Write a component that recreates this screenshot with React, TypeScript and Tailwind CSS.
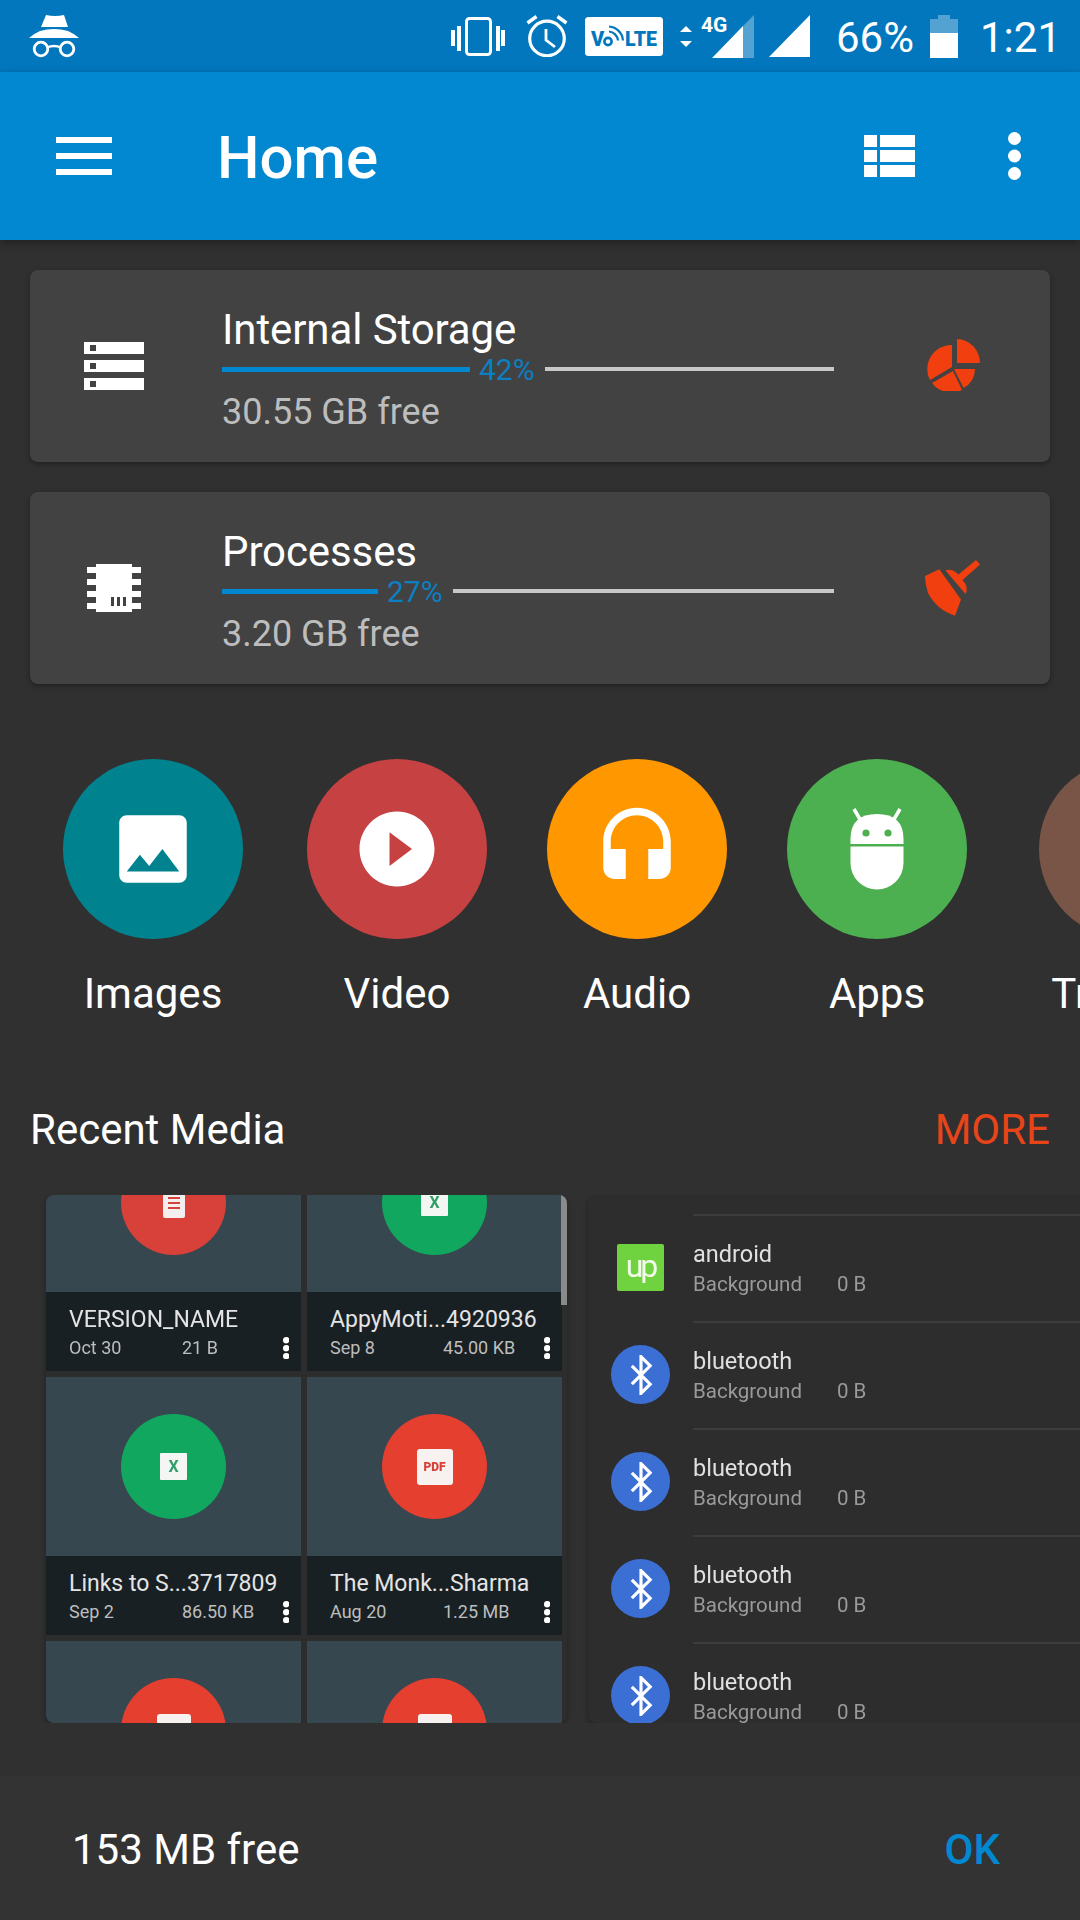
import React from "react";

function Incognito() {
  return (
    <svg width="50" height="44" viewBox="0 0 50 44" fill="white" className="shrink-0">
      <path d="M17 1 Q26 3 35 1 L39 13 H12 Z" />
      <path d="M0 24 Q6 19 11 17 Q25 13 39 17 Q44 19 50 24 Z" />
      <circle cx="12" cy="35" r="6.8" fill="none" stroke="white" strokeWidth="2.8" />
      <circle cx="38" cy="35" r="6.8" fill="none" stroke="white" strokeWidth="2.8" />
      <path d="M18 33.5 Q25 30.5 32 33.5" fill="none" stroke="white" strokeWidth="2.4" />
    </svg>
  );
}

function Vibrate() {
  return (
    <svg width="54" height="39" viewBox="0 0 54 39" fill="white" className="shrink-0">
      <rect x="0" y="13" width="4" height="16" />
      <rect x="6" y="9" width="4" height="25" />
      <rect x="15.5" y="1.5" width="24" height="36" rx="3" fill="none" stroke="white" strokeWidth="3" />
      <rect x="45" y="9" width="4" height="25" />
      <rect x="50" y="13" width="4" height="16" />
    </svg>
  );
}

function Alarm() {
  return (
    <svg width="42" height="42" viewBox="0 0 42 42" fill="none" stroke="white" className="shrink-0">
      <circle cx="21" cy="23.5" r="17.3" strokeWidth="3.2" />
      <path d="M1.5 8 L10.5 1.5 M31.5 1.5 L40.5 8" strokeWidth="3.4" />
      <path d="M20 14 V25 L29 32" strokeWidth="2.8" />
    </svg>
  );
}

function Volte() {
  return (
    <svg width="78" height="39" viewBox="0 0 78 39" className="shrink-0">
      <rect width="78" height="39" rx="3.5" fill="white" />
      <text x="6" y="29" fontFamily="Roboto" fontWeight="900" fontSize="20" fill="#0277bd">V</text>
      <circle cx="23" cy="24.5" r="3.6" fill="none" stroke="#0277bd" strokeWidth="2.6" />
      <path d="M24 14.5 A10 10 0 0 1 33 23.5 M24 9.5 A15 15 0 0 1 38 23.5" fill="none" stroke="#0277bd" strokeWidth="2.2" />
      <text x="40" y="29" fontFamily="Roboto" fontWeight="900" fontSize="20" fill="#0277bd" textLength="32" lengthAdjust="spacingAndGlyphs">LTE</text>
    </svg>
  );
}

function Arrows() {
  return (
    <svg width="12" height="21" viewBox="0 0 12 21" fill="white" className="shrink-0">
      <path d="M6 0 L12 6 H0 Z" />
      <path d="M0 15 H12 L6 21 Z" />
    </svg>
  );
}

function SignalWith4G() {
  return (
    <div className="relative w-[53px] h-[43px] shrink-0">
      <span className="absolute left-0 -top-[1px] text-[21px] leading-[22px] font-bold text-white">4G</span>
      <svg width="53" height="43" viewBox="0 0 53 43" className="block">
        <path d="M11 43 L42 11 V43 Z" fill="white" />
        <path d="M42 11 L53 0 V43 H42 Z" fill="white" fillOpacity="0.32" />
      </svg>
    </div>
  );
}

function Signal() {
  return (
    <svg width="41" height="42" viewBox="0 0 41 42" className="shrink-0">
      <path d="M0 42 L41 0 V42 Z" fill="white" />
    </svg>
  );
}

function Battery() {
  return (
    <svg width="28" height="43" viewBox="0 0 28 43" className="shrink-0">
      <path d="M8 0 H20 V4 H28 V18 H0 V4 H8 Z" fill="white" fillOpacity="0.32" />
      <rect y="18" width="28" height="25" fill="white" />
    </svg>
  );
}

function ListViewIcon() {
  return (
    <svg width="51" height="42" viewBox="0 0 51 42" fill="white">
      <path d="M0 0 H13 V12 H0 Z M16 0 H51 V12 H16 Z M0 15 H13 V27 H0 Z M16 15 H51 V27 H16 Z M0 30 H13 V42 H0 Z M16 30 H51 V42 H16 Z" />
    </svg>
  );
}

function Menu() {
  return (
    <div className="flex flex-col gap-[10px] w-[56px]">
      <div className="h-[6px] bg-white" />
      <div className="h-[6px] bg-white" />
      <div className="h-[6px] bg-white" />
    </div>
  );
}

function MoreDots({ r = 6.5, gap = 17.5, cls = "" }: { r?: number; gap?: number; cls?: string }) {
  return (
    <svg width={r * 2} height={r * 2 + gap * 2} viewBox={`0 0 ${r * 2} ${r * 2 + gap * 2}`} fill="white" className={cls}>
      <circle cx={r} cy={r} r={r} />
      <circle cx={r} cy={r + gap} r={r} />
      <circle cx={r} cy={r + gap * 2} r={r} />
    </svg>
  );
}

function ServerIcon() {
  return (
    <svg width="60" height="48" viewBox="0 0 60 48" className="shrink-0">
      <path fill="white" d="M0 0 H60 V12 H0 Z M0 18 H60 V30 H0 Z M0 36 H60 V48 H0 Z" />
      <path fill="#424242" d="M6 3 H12 V9 H6 Z M6 21 H12 V27 H6 Z M6 39 H12 V45 H6 Z" />
    </svg>
  );
}

function ChipIcon() {
  return (
    <svg width="54" height="48" viewBox="0 0 54 48" className="shrink-0">
      <path fill="white" d="M9 0 H45 V48 H9 Z M0 3 H54 V9 H0 Z M0 15 H54 V21 H0 Z M0 27 H54 V33 H0 Z M0 39 H54 V45 H0 Z" />
      <path fill="#424242" d="M24 33 H27 V42 H24 Z M30 33 H33 V42 H30 Z M36 33 H39 V42 H36 Z" />
    </svg>
  );
}

function PieIcon() {
  return (
    <svg width="53" height="52" viewBox="0 0 53 52" fill="#f23f0f" className="shrink-0 mb-[2px]">
      <path d="M30 0 A24 24 0 0 1 53 24 H30 Z" />
      <path d="M25 6 V28 L3 41 A24 24 0 0 1 25 6 Z" />
      <path d="M26 32 L35 51 A24 24 0 0 1 5 44 Z" />
      <path d="M27 30 H48 A22 22 0 0 1 36.5 49 Z" />
    </svg>
  );
}

function BroomIcon() {
  return (
    <svg width="55" height="56" viewBox="0 0 55 56" fill="#f23f0f" className="shrink-0">
      <path d="M0 16 L14.3 9.3 L36 39.5 L30 55.7 Q12 50 3 33 Q0 24 0 16 Z" />
      <path d="M20.5 10.5 Q27 8 33.5 14.5 L51 0 L55 4.5 L37.5 20 Q44 27 40.5 34 Z" />
    </svg>
  );
}

function StorageCard({
  icon,
  action,
  title,
  barClass,
  pct,
  free,
}: {
  icon: React.ReactNode;
  action: React.ReactNode;
  title: string;
  barClass: string;
  pct: string;
  free: string;
}) {
  return (
    <div className="h-[192px] rounded-[8px] bg-[#424242] shadow-[0_2px_5px_rgba(0,0,0,0.35)] flex items-center">
      <div className="w-[192px] pl-[54px] shrink-0 flex">{icon}</div>
      <div className="w-[612px] shrink-0 pt-[8px]">
        <div className="text-[42px] tracking-[-0.1px] leading-[48px] text-white">{title}</div>
        <div className="h-[30px] flex items-center">
          <div className={`${barClass} h-[5px] bg-[#0288d1] shrink-0`} />
          <span className="ml-[9px] pt-[2px] text-[30px] leading-[30px] text-[#0b7fc2]">{pct}</span>
          <div className="ml-[10px] flex-1 h-[4px] bg-[#c8c8c8]" />
        </div>
        <div className="mt-[6px] text-[36px] leading-[44px] text-[#bdbdbd]">{free}</div>
      </div>
      <div className="ml-[91px] w-[55px] flex justify-end">{action}</div>
    </div>
  );
}

function Category({
  bg,
  margin,
  label,
  children,
}: {
  bg: string;
  margin: string;
  label: string;
  children?: React.ReactNode;
}) {
  return (
    <div className={`${margin} w-[180px] shrink-0 flex flex-col items-center`}>
      <div className={`w-[180px] h-[180px] rounded-full ${bg} flex items-center justify-center`}>{children}</div>
      <div className="mt-[30px] text-[42px] leading-[50px] text-white whitespace-nowrap">{label}</div>
    </div>
  );
}

function AndroidGlyph() {
  return (
    <svg width="60" height="84" viewBox="0 0 60 84" fill="white">
      <path d="M7 2 L14 14 M53 2 L46 14" stroke="white" strokeWidth="3.5" />
      <path d="M3.5 37 V32 Q3.5 7 30 7 Q56.5 7 56.5 32 V37 Z" />
      <path d="M3.5 39.5 H56.5 V56 A26.5 26.5 0 0 1 3.5 56 Z" />
      <circle cx="19" cy="26" r="3.6" fill="#4caf50" />
      <circle cx="41" cy="26" r="3.6" fill="#4caf50" />
    </svg>
  );
}

function FileTile({
  name,
  date,
  size,
  circle,
  badge,
}: {
  name: string;
  date: string;
  size: string;
  circle: string;
  badge: React.ReactNode;
}) {
  return (
    <div className="flex flex-col">
      <div className="h-[179px] bg-[#37474f] flex items-center justify-center">
        <div className={`w-[105px] h-[105px] rounded-full ${circle} flex items-center justify-center`}>{badge}</div>
      </div>
      <div className="relative h-[79px] bg-[#182024] pl-[23px] pt-[13px]">
        <div className="text-[23px] leading-[30px] text-[#e4e4e4] whitespace-nowrap">{name}</div>
        <div className="flex items-center text-[18px] leading-[26px] text-[#bdbdbd]">
          <span className="w-[113px] shrink-0">{date}</span>
          <span>{size}</span>
        </div>
        <MoreDots r={3.2} gap={8} cls="absolute right-[12px] bottom-[12px]" />
      </div>
    </div>
  );
}

function DocBadge() {
  return (
    <div className="w-[22px] h-[30px] rounded-[2px] bg-[#f5eeee] flex flex-col justify-center gap-[3px] px-[5px]">
      <div className="h-[2px] bg-[#d8403a]" />
      <div className="h-[2px] bg-[#d8403a]" />
      <div className="h-[2px] bg-[#d8403a]" />
    </div>
  );
}

function XlsBadge() {
  return (
    <div className="w-[27px] h-[27px] rounded-[1px] bg-[#f3f6f3] flex items-center justify-center text-[16px] leading-none font-bold text-[#2f9e6a]">
      X
    </div>
  );
}

function PdfBadge() {
  return (
    <div className="w-[36px] h-[36px] rounded-[3px] bg-[#f7f1ef] flex items-center justify-center text-[12px] leading-none font-black text-[#d8403a]">
      PDF
    </div>
  );
}

function WhiteBadge() {
  return <div className="w-[34px] h-[34px] rounded-[3px] bg-[#f7f1ef]" />;
}

function ProcessRow({ name, icon }: { name: string; icon: React.ReactNode }) {
  return (
    <div className="h-[107px] shrink-0 flex pl-[23px]">
      <div className="w-[82px] shrink-0 flex items-center">
        <div className="w-[59px] flex justify-center">{icon}</div>
      </div>
      <div className="flex-1 border-t-[2px] border-[#3c3c3c] pt-[24px]">
        <div className="text-[23.5px] leading-[28px] text-[#e0e0e0]">{name}</div>
        <div className="flex text-[20.5px] leading-[26px] text-[#9a9a9a] mt-[3px]">
          <span className="w-[144px] shrink-0">Background</span>
          <span>0 B</span>
        </div>
      </div>
    </div>
  );
}

function BluetoothIcon() {
  return (
    <div className="w-[59px] h-[59px] rounded-full bg-[#3b6fd4] flex items-center justify-center">
      <svg width="40" height="40" viewBox="0 0 24 24" fill="none" stroke="white" strokeWidth="1.9">
        <path d="M6.5 6.5 L17.5 17.5 L12 23 V1 L17.5 6.5 L6.5 17.5" />
      </svg>
    </div>
  );
}

function UpIcon() {
  return (
    <div className="w-[47px] h-[47px] rounded-[2px] bg-[#6fd33f] flex items-center justify-center pb-[4px] text-[32px] leading-none tracking-[-3px] text-[#f2fbe9]">
      up
    </div>
  );
}

export default function App() {
  return (
    <div className="font-['Roboto',sans-serif] w-[1080px] h-[1920px] bg-[#303030] overflow-hidden text-white flex flex-col">
      <div className="h-[72px] shrink-0 bg-[#0277bd] flex items-center pl-[29px] text-[42px] leading-none text-white">
        <Incognito />
        <div className="ml-[372px]"><Vibrate /></div>
        <div className="ml-[21px]"><Alarm /></div>
        <div className="ml-[17px]"><Volte /></div>
        <div className="ml-[17px]"><Arrows /></div>
        <div className="ml-[9px]"><SignalWith4G /></div>
        <div className="ml-[15px]"><Signal /></div>
        <span className="ml-[26px] w-[76px] pt-[3px] whitespace-nowrap">66%</span>
        <div className="ml-[18px]"><Battery /></div>
        <span className="ml-[22px] pt-[3px]">1:21</span>
      </div>
      <div className="relative z-10 h-[168px] shrink-0 bg-[#0288d1] shadow-[0_3px_8px_rgba(0,0,0,0.35)] flex items-center pl-[56px]">
        <Menu />
        <span className="ml-[105px] pt-[4px] text-[60px] leading-[72px] font-medium text-white">Home</span>
        <div className="ml-auto"><ListViewIcon /></div>
        <div className="ml-[93px] mr-[59px]"><MoreDots /></div>
      </div>

      <div className="px-[30px] pt-[30px] flex flex-col gap-[30px]">
        <StorageCard
          icon={<ServerIcon />}
          action={<PieIcon />}
          title="Internal Storage"
          barClass="w-[248px]"
          pct="42%"
          free="30.55 GB free"
        />
        <StorageCard
          icon={<div className="ml-[3px]"><ChipIcon /></div>}
          action={<BroomIcon />}
          title="Processes"
          barClass="w-[156px]"
          pct="27%"
          free="3.20 GB free"
        />
      </div>

      <div className="mt-[75px] pl-[63px] flex overflow-hidden">
        <Category bg="bg-[#00838f]" margin="" label="Images">
          <svg width="90" height="90" viewBox="0 0 24 24" fill="white">
            <path d="M21 19V5c0-1.1-.9-2-2-2H5c-1.1 0-2 .9-2 2v14c0 1.1.9 2 2 2h14c1.1 0 2-.9 2-2zM8.5 13.5l2.5 3.01L14.5 12l4.5 6H5l3.5-4.5z" />
          </svg>
        </Category>
        <Category bg="bg-[#c64242]" margin="ml-[64px]" label="Video">
          <svg width="90" height="90" viewBox="0 0 24 24" fill="white">
            <path d="M12 2C6.48 2 2 6.48 2 12s4.48 10 10 10 10-4.48 10-10S17.52 2 12 2zm-2 14.5v-9l6 4.5-6 4.5z" />
          </svg>
        </Category>
        <Category bg="bg-[#ff9800]" margin="ml-[60px]" label="Audio">
          <svg width="90" height="90" viewBox="0 0 24 24" fill="white">
            <path d="M12 1c-4.97 0-9 4.03-9 9v7c0 1.66 1.34 3 3 3h3v-8H5v-2c0-3.87 3.13-7 7-7s7 3.13 7 7v2h-4v8h3c1.66 0 3-1.34 3-3v-7c0-4.97-4.03-9-9-9z" />
          </svg>
        </Category>
        <Category bg="bg-[#4caf50]" margin="ml-[60px]" label="Apps">
          <AndroidGlyph />
        </Category>
        <Category bg="bg-[#795548]" margin="ml-[72px]" label="Transfer" />
      </div>

      <div className="mt-[86px] px-[30px] flex items-center justify-between text-[42px] leading-[50px]">
        <span className="text-white">Recent Media</span>
        <span className="text-[#e8441a]">MORE</span>
      </div>

      <div className="mt-[40px] pl-[46px] flex gap-[21px] overflow-hidden">
        <div className="relative w-[521px] h-[528px] shrink-0 rounded-[8px] bg-[#2d2d2d] overflow-hidden shadow-[0_2px_5px_rgba(0,0,0,0.35)]">
          <div className="-mt-[82px] w-[516px] grid grid-cols-2 gap-[6px] blur-[0.7px]">
            <FileTile name="VERSION_NAME" date="Oct 30" size="21 B" circle="bg-[#d8403a]" badge={<DocBadge />} />
            <FileTile name="AppyMoti...4920936" date="Sep 8" size="45.00 KB" circle="bg-[#12a75f]" badge={<XlsBadge />} />
            <FileTile name="Links to S...3717809" date="Sep 2" size="86.50 KB" circle="bg-[#12a75f]" badge={<XlsBadge />} />
            <FileTile name="The Monk...Sharma" date="Aug 20" size="1.25 MB" circle="bg-[#e53f30]" badge={<PdfBadge />} />
            <FileTile name="" date="" size="" circle="bg-[#e53f30]" badge={<WhiteBadge />} />
            <FileTile name="" date="" size="" circle="bg-[#e53f30]" badge={<WhiteBadge />} />
          </div>
          <div className="absolute right-0 top-0 w-[6px] h-[110px] bg-[#8a8a8a]" />
        </div>

        <div className="w-[520px] h-[528px] shrink-0 rounded-[8px] bg-[#2d2d2d] overflow-hidden shadow-[0_2px_5px_rgba(0,0,0,0.35)] pt-[19px]">
          <div className="blur-[0.7px]">
            <ProcessRow name="android" icon={<UpIcon />} />
            <ProcessRow name="bluetooth" icon={<BluetoothIcon />} />
            <ProcessRow name="bluetooth" icon={<BluetoothIcon />} />
            <ProcessRow name="bluetooth" icon={<BluetoothIcon />} />
            <ProcessRow name="bluetooth" icon={<BluetoothIcon />} />
          </div>
        </div>
      </div>

      <div className="mt-auto h-[144px] shrink-0 bg-[#333333] flex items-center justify-between pl-[72px] pr-[80px] pt-[4px] text-[42px] leading-[50px]">
        <span className="text-white">153 MB free</span>
        <span className="font-medium text-[#0288d1]">OK</span>
      </div>
    </div>
  );
}
